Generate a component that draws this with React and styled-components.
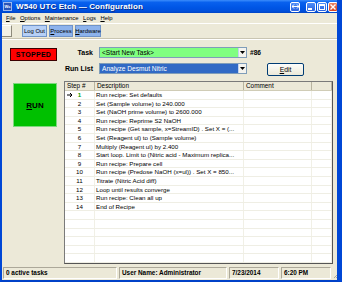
import React from "react";
import styled, { createGlobalStyle, css } from "styled-components";

const Global = createGlobalStyle`
  html, body { margin: 0; padding: 0; background: #ece9d8; }
  body { font-family: "Liberation Sans", Tahoma, Arial, sans-serif; color: #000; }
  * { box-sizing: border-box; }
`;

const Window = styled.div`
  width: 342px;
  height: 282px;
  display: flex;
  flex-direction: column;
  background: #ece9d8;
  border-left: 2px solid #0047d6;
  border-right: 5px solid #0047d6;
  border-bottom: 2px solid #0041c8;
  overflow: hidden;
`;

const TitleBar = styled.div`
  height: 13px;
  flex: none;
  margin-left: -2px;
  margin-right: -5px;
  display: flex;
  align-items: center;
  padding: 0 4px 0 3px;
  background: linear-gradient(#3c8dfb 0%, #0961ee 18%, #0056e6 55%, #0050dc 85%, #0043c4 100%);
  color: #fff;
`;

const AppIcon = styled.div`
  width: 9px;
  height: 9px;
  background: #2a55b8;
  border: 1px solid #9db8ec;
  font-size: 4px;
  font-weight: bold;
  line-height: 7px;
  text-align: center;
  color: #fff;
  margin-right: 4px;
`;

const Title = styled.div`
  font-size: 8px;
  font-weight: bold;
  letter-spacing: 0.1px;
  white-space: nowrap;
  flex: 1;
  text-shadow: 1px 1px 0 #0a2f8c;
`;

const CapButton = styled.div`
  width: 10px;
  height: 10px;
  margin-left: ${(p) => p.gap || 1}px;
  border: 1px solid #fff;
  border-radius: 2px;
  display: flex;
  align-items: center;
  justify-content: center;
  background: ${(p) => (p.close ? "linear-gradient(#e8866a, #d8401c)" : "linear-gradient(#4f8ef8, #2a63e0)")};
`;

const MenuBar = styled.div`
  height: 11px;
  flex: none;
  display: flex;
  align-items: center;
  gap: 4.5px;
  padding-left: 4px;
  font-size: 5.9px;
  border-bottom: 1px solid #fff;
`;

const MenuItem = styled.span`
  white-space: nowrap;
  & u { text-decoration-thickness: 0.5px; }
`;

const Toolbar = styled.div`
  height: 15px;
  flex: none;
  display: flex;
  align-items: flex-end;
  padding-bottom: 1px;
  border-bottom: 1px solid #c9c5b2;
  box-shadow: 0 1px 0 #fff;
`;

const BlankTool = styled.div`
  width: 11px;
  height: 12px;
  margin-left: -1px;
  margin-right: 10px;
  background: #f3f1e6;
  border: 1px solid #fff;
  border-right-color: #8e8b7c;
  border-bottom-color: #8e8b7c;
`;

const Tab = styled.div`
  height: 12px;
  width: ${(p) => p.w}px;
  margin-right: 2px;
  display: flex;
  align-items: center;
  justify-content: center;
  font-size: 5.9px;
  white-space: nowrap;
  border: 1px solid #6f93c8;
  background: ${(p) => (p.light ? "#b6d0f6" : "#8db3ec")};
  & u { text-decoration-thickness: 0.5px; }
`;

const Body = styled.div`
  flex: 1;
  min-height: 0;
  display: grid;
  grid-template-columns: 62px 1fr;
  padding-right: 4px;
`;

const LeftCol = styled.div`
  display: flex;
  flex-direction: column;
`;

const StateBox = styled.div`
  margin-top: 9px;
  margin-left: 8px;
  width: 47px;
  height: 13px;
  background: #ff0000;
  border: 1px solid #3a0000;
  display: flex;
  align-items: center;
  justify-content: center;
  font-size: 7px;
  font-weight: bold;
  letter-spacing: 0.3px;
`;

const RunBox = styled.div`
  margin-top: 22px;
  margin-left: 11px;
  width: 44px;
  height: 44px;
  background: #00c000;
  border: 1px solid #7fd77f;
  display: flex;
  align-items: center;
  justify-content: center;
  font-size: 8px;
  font-weight: bold;
  & u { text-decoration-thickness: 0.7px; }
`;

const RightCol = styled.div`
  display: flex;
  flex-direction: column;
  min-height: 0;
  padding-top: 8px;
  padding-bottom: 2px;
`;

const FormRow = styled.div`
  display: flex;
  align-items: flex-start;
  height: ${(p) => p.h || 11}px;
  margin-bottom: ${(p) => p.mb || 0}px;
`;

const Label = styled.div`
  width: 32px;
  height: 11px;
  padding-right: 3px;
  display: flex;
  align-items: center;
  justify-content: flex-end;
  font-size: 7px;
  font-weight: bold;
  white-space: nowrap;
`;

const Combo = styled.div`
  width: 148px;
  height: 11px;
  margin-left: 3px;
  display: flex;
  border: 1px solid #7f9db9;
  ${(p) =>
    p.variant === "green"
      ? css`
          background: #80ff80;
          color: #000;
        `
      : css`
          background: #316ac5;
          color: #fff;
        `}
`;

const ComboText = styled.div`
  flex: 1;
  font-size: 6.6px;
  line-height: 9px;
  padding-left: 2px;
  white-space: nowrap;
  overflow: hidden;
`;

const ComboBtn = styled.div`
  width: 8px;
  height: 9px;
  background: #f4f3ee;
  border-left: 1px solid #c2d3ef;
  display: flex;
  align-items: center;
  justify-content: center;
`;

const Hash = styled.div`
  margin-left: 3px;
  font-size: 6.6px;
  font-weight: bold;
  line-height: 11px;
`;

const Button = styled.div`
  margin-left: 20px;
  width: 37px;
  height: 13px;
  display: flex;
  align-items: center;
  justify-content: center;
  font-size: 6.8px;
  background: linear-gradient(#fdfdfb, #ece9d8);
  border: 1px solid #003c74;
  border-radius: 2px;
  & u { text-decoration-thickness: 0.5px; }
`;

const Table = styled.div`
  flex: 1;
  min-height: 0;
  overflow: hidden;
  background: #fff;
  border: 1px solid #555;
  border-top-color: #7a7a7a;
  border-left-color: #7a7a7a;
`;

const cols = "30px 149px 68px 1fr";

const HeadRow = styled.div`
  display: grid;
  grid-template-columns: ${cols};
  height: 9px;
  background: #ece9d8;
  border-bottom: 1px solid #d0ccb6;
`;

const HeadCell = styled.div`
  font-size: 6.4px;
  line-height: 8px;
  padding-left: 2px;
  border-right: 1px solid #b8b4a0;
  white-space: nowrap;
  overflow: hidden;
`;

const Row = styled.div`
  display: grid;
  grid-template-columns: ${cols};
  height: 8.6px;
  border-bottom: 1px solid #efeee4;
`;

const Cell = styled.div`
  font-size: 6.2px;
  line-height: 7.6px;
  white-space: nowrap;
  overflow: hidden;
  border-right: 1px solid #f1f0e6;
  padding-left: ${(p) => (p.pad ? 1 : 0)}px;
  ${(p) =>
    p.num &&
    css`
      display: flex;
      align-items: center;
      justify-content: center;
      position: relative;
      color: ${p.current ? "#00a000" : "#000"};
      font-weight: ${p.current ? "bold" : "normal"};
    `}
`;

const Pointer = styled.svg`
  position: absolute;
  left: 2px;
  top: 1px;
`;

const StatusBar = styled.div`
  height: 14px;
  flex: none;
  display: grid;
  grid-template-columns: 116px 110px 52px 52px 1fr;
  align-items: stretch;
  padding: 1px 0 1px 1px;
`;

const Panel = styled.div`
  border: 1px solid #aca899;
  border-right-color: #fff;
  border-bottom-color: #fff;
  margin-right: 2px;
  font-size: 6.4px;
  font-weight: bold;
  line-height: 10px;
  padding-left: 2px;
  white-space: nowrap;
  overflow: hidden;
`;

const Grip = styled.svg`
  align-self: end;
`;

const steps = [
  "Run recipe: Set defaults",
  "Set (Sample volume) to 240.000",
  "Set (NaOH prime volume) to 2600.000",
  "Run recipe: Reprime S2 NaOH",
  "Run recipe (Get sample, x=StreamID) . Set X = (...",
  "Set (Reagent ul) to (Sample volume)",
  "Multiply (Reagent ul) by 2.400",
  "Start loop. Limit to (Nitric acid - Maximum replica...",
  "Run recipe: Prepare cell",
  "Run recipe (Predose NaOH (x=ul)) . Set X = 850...",
  "Titrate (Nitric Acid diff)",
  "Loop until results converge",
  "Run recipe: Clean all up",
  "End of Recipe",
];

const DropArrow = () => (
  <svg width="5" height="3" viewBox="0 0 5 3">
    <path d="M0 0h5L2.5 3z" fill="#000" />
  </svg>
);

export default function App() {
  const rows = [...steps, ...Array(8).fill("")];
  return (
    <>
      <Global />
      <Window>
        <TitleBar>
          <AppIcon>Wc</AppIcon>
          <Title>W540 UTC Etch — Configuration</Title>
          <CapButton>
            <svg width="7" height="5" viewBox="0 0 7 5">
              <path d="M0 2.5h7M2 0.5L0 2.5l2 2M5 0.5l2 2-2 2" stroke="#fff" fill="none" strokeWidth="1" />
            </svg>
          </CapButton>
          <CapButton gap={6}>
            <svg width="6" height="6" viewBox="0 0 6 6">
              <rect x="0" y="4" width="4" height="2" fill="#fff" />
            </svg>
          </CapButton>
          <CapButton>
            <svg width="6" height="6" viewBox="0 0 6 6">
              <rect x="0.5" y="0.5" width="5" height="5" stroke="#fff" fill="none" />
              <rect x="0" y="0" width="6" height="2" fill="#fff" />
            </svg>
          </CapButton>
          <CapButton close>
            <svg width="6" height="6" viewBox="0 0 6 6">
              <path d="M0.5 0.5l5 5M5.5 0.5l-5 5" stroke="#fff" strokeWidth="1.4" />
            </svg>
          </CapButton>
        </TitleBar>
        <MenuBar>
          <MenuItem><u>F</u>ile</MenuItem>
          <MenuItem><u>O</u>ptions</MenuItem>
          <MenuItem><u>M</u>aintenance</MenuItem>
          <MenuItem><u>L</u>ogs</MenuItem>
          <MenuItem><u>H</u>elp</MenuItem>
        </MenuBar>
        <Toolbar>
          <BlankTool />
          <Tab w={25} light>Log Out</Tab>
          <Tab w={24}><u>P</u>rocess</Tab>
          <Tab w={26}><u>H</u>ardware</Tab>
        </Toolbar>
        <Body>
          <LeftCol>
            <StateBox>STOPPED</StateBox>
            <RunBox><u>R</u>UN</RunBox>
          </LeftCol>
          <RightCol>
            <FormRow mb={5}>
              <Label>Task</Label>
              <Combo variant="green">
                <ComboText>&lt;Start New Task&gt;</ComboText>
                <ComboBtn><DropArrow /></ComboBtn>
              </Combo>
              <Hash>#86</Hash>
            </FormRow>
            <FormRow h={13} mb={5}>
              <Label>Run List</Label>
              <Combo variant="blue">
                <ComboText>Analyze Desmut Nitric</ComboText>
                <ComboBtn><DropArrow /></ComboBtn>
              </Combo>
              <Button><u>E</u>dit</Button>
            </FormRow>
            <Table>
              <HeadRow>
                <HeadCell>Step #</HeadCell>
                <HeadCell>Description</HeadCell>
                <HeadCell>Comment</HeadCell>
                <HeadCell />
              </HeadRow>
              {rows.map((text, i) => (
                <Row key={i}>
                  <Cell num current={i === 0}>
                    {i === 0 && (
                      <Pointer width="6" height="6" viewBox="0 0 6 6">
                        <path d="M0 3h5M3 1l2 2-2 2" stroke="#000" strokeWidth="1" fill="none" />
                      </Pointer>
                    )}
                    {text ? i + 1 : ""}
                  </Cell>
                  <Cell pad>{text}</Cell>
                  <Cell />
                  <Cell />
                </Row>
              ))}
            </Table>
          </RightCol>
        </Body>
        <StatusBar>
          <Panel>0 active tasks</Panel>
          <Panel>User Name: Administrator</Panel>
          <Panel>7/23/2014</Panel>
          <Panel>6:20 PM</Panel>
          <Grip width="6" height="6" viewBox="0 0 6 6">
            <path d="M5 1L1 5M5 3L3 5" stroke="#aca899" strokeWidth="1" />
          </Grip>
        </StatusBar>
      </Window>
    </>
  );
}
